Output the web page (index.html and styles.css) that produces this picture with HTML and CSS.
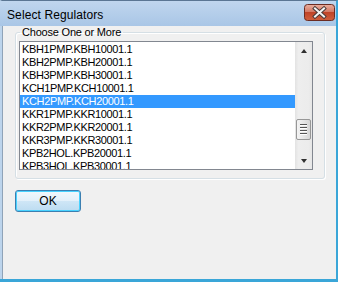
FILE: index.html
```html
<!DOCTYPE html>
<html lang="en">
<head>
    <meta charset="UTF-8">
    <title>Select Regulators</title>
    <link rel="stylesheet" href="styles.css">
</head>
<body>
    <div class="window">
        <div class="titlebar">
            <span class="title">Select Regulators</span>
            <button class="close">
                <svg width="31" height="17" viewBox="0 0 31 17">
                    <defs>
                        <linearGradient id="red" x1="0" y1="0" x2="0" y2="1">
                            <stop offset="0" stop-color="#eab0a0"/>
                            <stop offset="0.45" stop-color="#d47a66"/>
                            <stop offset="0.5" stop-color="#c04428"/>
                            <stop offset="1" stop-color="#d0603e"/>
                        </linearGradient>
                    </defs>
                    <rect x="0.5" y="0.5" width="30" height="16" rx="3" fill="url(#red)" stroke="#6b2c22"/>
                    <path d="M11 4.5 L20 12.5 M20 4.5 L11 12.5" stroke="#4a3a38" stroke-width="4" stroke-linecap="square"/>
                    <path d="M11 4.5 L20 12.5 M20 4.5 L11 12.5" stroke="#f4f4f4" stroke-width="2" stroke-linecap="square"/>
                </svg>
            </button>
        </div>
        <div class="client">
            <fieldset class="group">
                <legend>Choose One or More</legend>
                <div class="listbox">
                    <ul class="items">
                        <li>KBH1PMP.KBH10001.1</li>
                        <li>KBH2PMP.KBH20001.1</li>
                        <li>KBH3PMP.KBH30001.1</li>
                        <li>KCH1PMP.KCH10001.1</li>
                        <li class="selected">KCH2PMP.KCH20001.1</li>
                        <li>KKR1PMP.KKR10001.1</li>
                        <li>KKR2PMP.KKR20001.1</li>
                        <li>KKR3PMP.KKR30001.1</li>
                        <li>KPB2HOL.KPB20001.1</li>
                        <li>KPB3HOL.KPB30001.1</li>
                    </ul>
                    <div class="scrollbar">
                        <div class="arrow"><span class="tri up"></span></div>
                        <div class="track">
                            <div class="thumb"><span></span><span></span><span></span><span></span></div>
                        </div>
                        <div class="arrow"><span class="tri down"></span></div>
                    </div>
                </div>
            </fieldset>
            <button class="ok">OK</button>
        </div>
    </div>
</body>
</html>
```

FILE: styles.css
```css
html, body {
    margin: 0;
    padding: 0;
}
body {
    width: 338px;
    height: 282px;
    overflow: hidden;
    font-family: "Liberation Sans", Arial, sans-serif;
    background: #3aa6d8;
}
.window {
    width: 338px;
    height: 279px;
    box-sizing: border-box;
    border-left: 2px solid #bcd4ec;
    border-right: 2px solid #3aa6d8;
    border-top: 1px solid #5b7693;
    display: flex;
    flex-direction: column;
    background: #bcd4ec;
}
.titlebar {
    height: 25px;
    display: flex;
    align-items: center;
    justify-content: space-between;
    background: linear-gradient(#c0d6ee, #a9c6e6);
    margin-left: -2px;
    padding-left: 7px;
    padding-right: 1px;
}
.title {
    font-size: 12px;
    letter-spacing: 0.1px;
    color: #000;
    margin-top: 2px;
}
.close {
    border: none;
    background: none;
    padding: 0;
    width: 31px;
    height: 17px;
    margin-top: -3px;
    display: block;
}
.close svg { display: block; }
.client {
    flex: 1;
    background: #f0f0f0;
    border-left: 1px solid #8fa3b8;
    padding: 0 11px 0 12px;
}
.group {
    margin: 0;
    padding: 2px 11px 8px 3px;
    border: 1px solid #d5dfe5;
    border-radius: 3px;
    box-shadow: inset 1px 1px 0 #fff, 1px 1px 0 #fff;
}
.group legend {
    font-size: 11px;
    letter-spacing: -0.2px;
    line-height: 13px;
    padding: 0 2px;
    margin-left: 1px;
    color: #000;
}
.listbox {
    height: 129px;
    box-sizing: border-box;
    border: 1px solid #828790;
    background: #fff;
    display: flex;
    overflow: hidden;
}
.items {
    flex: 1;
    list-style: none;
    margin: 0;
    padding: 1px 0 0;
    overflow: hidden;
}
.items li {
    font-size: 11px;
    letter-spacing: -0.35px;
    line-height: 13px;
    height: 13px;
    padding-left: 2px;
    color: #000;
    white-space: nowrap;
}
.items li.selected {
    background: #3399ff;
    color: #fff;
}
.scrollbar {
    width: 17px;
    display: flex;
    flex-direction: column;
    background: linear-gradient(90deg, #e3e3e3, #eeeeee 20%, #ececec 80%, #e6e6e6);
}
.arrow {
    height: 17px;
    display: flex;
    align-items: center;
    justify-content: center;
}
.tri {
    width: 0;
    height: 0;
    border-left: 3.5px solid transparent;
    border-right: 3.5px solid transparent;
}
.tri.up { border-bottom: 4px solid #303030; }
.tri.down { border-top: 4px solid #303030; }
.track {
    flex: 1;
    padding-top: 60px;
}
.thumb {
    height: 21px;
    margin: 0 1px;
    box-sizing: border-box;
    border: 1px solid #979797;
    border-radius: 2px;
    background: linear-gradient(90deg, #f4f4f4, #e6e6e6 50%, #d6d6d6);
    display: flex;
    flex-direction: column;
    align-items: center;
    justify-content: center;
    gap: 1px;
}
.thumb span {
    width: 7px;
    height: 1px;
    background: #555;
    border-bottom: 1px solid #fff;
}
.ok {
    display: block;
    margin-top: 11px;
    width: 66px;
    height: 22px;
    font-family: "Liberation Sans", Arial, sans-serif;
    font-size: 12px;
    color: #000;
    border: 1px solid #3c7fb1;
    border-radius: 3px;
    background: linear-gradient(#f2f8fc, #e3f0fa 50%, #cfe6f6 51%, #bcdcf1);
    box-shadow: inset 0 0 0 1px #48d2ff;
    padding: 0;
}
```
